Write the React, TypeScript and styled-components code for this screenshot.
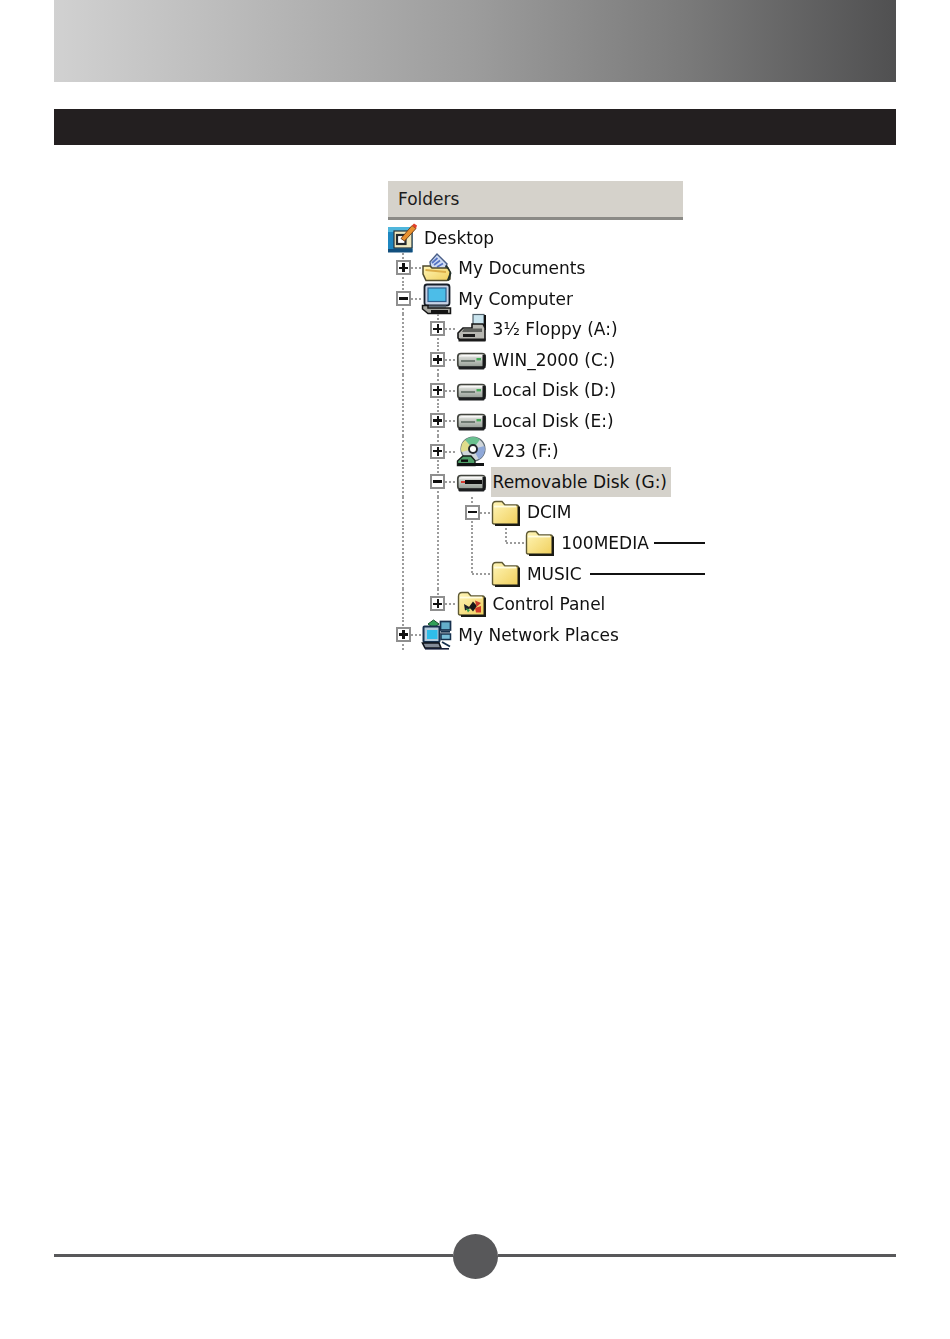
import React from "react";
import styled, { createGlobalStyle } from "styled-components";

const Global = createGlobalStyle`
  html, body { margin: 0; padding: 0; background: #fff; }
  body { font-family: "DejaVu Sans", "Liberation Sans", sans-serif; }
`;

const Page = styled.div`
  box-sizing: border-box;
  width: 950px;
  height: 1339px;
  padding: 0 54px 60px;
  display: flex;
  flex-direction: column;
  overflow: hidden;
`;

const Band = styled.div`
  height: 82px;
  flex: none;
  background: linear-gradient(to right, #d1d1d1 0%, #bcbcbc 20%, #9c9c9c 50%, #7a7a7a 75%, #505051 100%);
`;

const TitleBar = styled.div`
  height: 36px;
  flex: none;
  margin-top: 27px;
  background: #231f20;
`;

const Panel = styled.section`
  margin: 36px 0 0 334px;
  width: 317px;
  flex: none;
  filter: blur(0.6px);
`;

const PanelHeader = styled.div`
  box-sizing: border-box;
  width: 295px;
  height: 38.5px;
  padding: 0 0 0 10px;
  display: flex;
  align-items: center;
  background: #d5d2cb;
  border-bottom: 3px solid #8b8a86;
  font-size: 17px;
  color: #1c1c1c;
`;

const Tree = styled.div`
  margin-top: 3px;
  display: flex;
  flex-direction: column;
`;

const Row = styled.div`
  height: 30.55px;
  display: flex;
  align-items: center;
`;

type SlotKind = "blank" | "pipe" | "tee" | "elbow";

const Slot = styled.div<{ $kind: SlotKind }>`
  position: relative;
  flex: none;
  align-self: stretch;
  width: 34.3px;

  &::before {
    content: "";
    display: ${(p) => (p.$kind === "blank" ? "none" : "block")};
    position: absolute;
    left: 14.25px;
    top: 0;
    width: 2px;
    height: ${(p) => (p.$kind === "elbow" ? "50%" : "100%")};
    background: repeating-linear-gradient(to bottom, #9c9c9c 0 2px, transparent 2px 4px);
  }

  &::after {
    content: "";
    display: ${(p) => (p.$kind === "tee" || p.$kind === "elbow" ? "block" : "none")};
    position: absolute;
    left: 15px;
    right: 0;
    top: calc(50% - 1px);
    height: 2px;
    background: repeating-linear-gradient(to right, #9c9c9c 0 2px, transparent 2px 4px);
  }
`;

const Expander = styled.span`
  position: absolute;
  z-index: 1;
  left: 8px;
  top: calc(50% - 8px);
  box-sizing: border-box;
  width: 15px;
  height: 15px;
  background: #fff;
  border: 2px solid #8f8f8f;
`;

const ExpanderH = styled.i`
  position: absolute;
  left: 1px;
  right: 1px;
  top: 4.25px;
  height: 2.5px;
  background: #111;
`;

const ExpanderV = styled.i`
  position: absolute;
  top: 1px;
  bottom: 1px;
  left: 4.25px;
  width: 2.5px;
  background: #111;
`;

const IconBox = styled.span`
  flex: none;
  width: 29px;
  height: 30px;
  display: block;
  & > svg { display: block; overflow: visible; }
`;

const Label = styled.span<{ $selected?: boolean }>`
  flex: none;
  margin-left: 5px;
  padding: 0 ${(p) => (p.$selected ? "4px" : "2px")} 0 2px;
  line-height: 30.5px;
  font-size: 17px;
  white-space: nowrap;
  color: #111;
  background: ${(p) => (p.$selected ? "#d5d2cb" : "transparent")};
`;

const Leader = styled.span<{ $width: number }>`
  flex: none;
  margin-left: auto;
  width: ${(p) => p.$width}px;
  height: 2px;
  background: #111;
`;

const Footer = styled.footer`
  margin-top: auto;
  flex: none;
  display: flex;
  align-items: center;
`;

const FooterLine = styled.div`
  flex: 1;
  height: 3px;
  margin-bottom: 3px;
  background: #58585a;
`;

const FooterDot = styled.div`
  flex: none;
  width: 45px;
  height: 45px;
  border-radius: 50%;
  background: #58585a;
`;

const Svg = ({ children }: { children: React.ReactNode }) => (
  <svg width="29" height="30" viewBox="0 0 29 30" xmlns="http://www.w3.org/2000/svg">
    {children}
  </svg>
);

const Defs = () => (
  <defs>
    <linearGradient id="fold" x1="0" y1="0" x2="1" y2="1">
      <stop offset="0" stopColor="#fff6b8" />
      <stop offset="1" stopColor="#f0cf5c" />
    </linearGradient>
    <linearGradient id="disk" x1="0" y1="0" x2="0" y2="1">
      <stop offset="0" stopColor="#eeeeea" />
      <stop offset="1" stopColor="#8f9890" />
    </linearGradient>
  </defs>
);

const DesktopIcon = () => (
  <Svg>
    <rect x="0" y="4" width="24.5" height="25" fill="#1d86c0" />
    <rect x="0" y="4" width="24.5" height="5" fill="#4fb6dc" />
    <rect x="6" y="8" width="18" height="17" fill="#efe9c0" stroke="#27323a" strokeWidth="1.2" />
    <rect x="9" y="12" width="8.5" height="9" fill="#fff" stroke="#22282c" strokeWidth="2.2" />
    <path d="M13 15.5 L24 2.5 L28 5.5 L16.5 18 Z" fill="#e8912f" stroke="#6f3a10" strokeWidth="0.9" />
    <path d="M24 2.5 L28 5.5 L29 2.5 L26 0.5 Z" fill="#e2402a" />
    <path d="M0 26 H24.5 V29.5 H0 Z" fill="#124f7d" />
  </Svg>
);

const DocumentsIcon = () => (
  <Svg>
    <path d="M8 9 L15 1 L25 11 L22 18 L9 16 Z" fill="#cfdcf4" stroke="#4a5f88" strokeWidth="1.4" />
    <path d="M10 10 L15.5 5 M12 12 L18 7.5 M15 14 L21 10.5" stroke="#5573c4" strokeWidth="1.7" />
    <path d="M1 13 H8 L10 15 H26 L28 19 V26 L25 27.5 H4 L1 21 Z" fill="url(#fold)" stroke="#4f4a2c" strokeWidth="1.5" />
    <path d="M23 13 L28 19 L25 27 L27 28 L29.5 20 L25 12 Z" fill="#22302a" />
    <path d="M3.5 17 L24 19" stroke="#dcae48" strokeWidth="1.8" />
  </Svg>
);

const ComputerIcon = () => (
  <Svg>
    <rect x="2.5" y="0.5" width="25" height="21" rx="2.5" fill="#c8d2e6" stroke="#161d28" strokeWidth="1.8" />
    <rect x="6" y="4" width="18" height="13.5" fill="#4cbde8" />
    <rect x="6" y="4" width="18" height="13.5" fill="none" stroke="#2e5f8e" strokeWidth="1.2" />
    <path d="M7 21.5 H24 V23.5 H7 Z" fill="#5e6b78" />
    <path d="M0.5 21.5 L6 21.5 L6 24 L28.5 24 V29.5 H6 L0.5 25 Z" fill="#a6a6a0" stroke="#141414" strokeWidth="1.5" />
    <rect x="9" y="26" width="17" height="3" fill="#141414" />
  </Svg>
);

const FloppyIcon = () => (
  <Svg>
    <rect x="16" y="0.5" width="11" height="14.5" fill="#c9e4ee" stroke="#50606a" strokeWidth="1.2" />
    <path d="M27 1 L29 1 V16 H27 Z" fill="#111" />
    <path d="M15 10 L26 10 L28 14 L28 26 H3 L1 24 V19 L6 14 H15 Z" fill="#b8b8b2" stroke="#161616" strokeWidth="1.6" />
    <path d="M7 14.5 H25 V18 H5 Z" fill="#5e605c" />
    <rect x="6" y="20" width="12" height="3" fill="#1a1a1a" />
    <rect x="1.5" y="24.5" width="27" height="3" fill="#1a1a1a" />
  </Svg>
);

const DiskIcon = ({ removable }: { removable?: boolean }) => (
  <Svg>
    <rect x="0.8" y="8.5" width="27.4" height="14" rx="3.2" fill="url(#disk)" stroke="#43453f" strokeWidth="1.7" />
    <path d="M2 12 Q3 10 6 10 H26 V11.5 H4 Z" fill="#fff" opacity="0.8" />
    {removable ? (
      <>
        <rect x="4" y="14" width="5" height="2" fill="#d73a30" />
        <rect x="8" y="13" width="17" height="4" fill="#0f0f0f" />
      </>
    ) : (
      <>
        <rect x="4" y="15" width="14" height="2" fill="#6f7a72" />
        <rect x="19.5" y="13" width="4.5" height="2.4" fill="#45ac58" />
      </>
    )}
    <rect x="1.5" y="21.2" width="26" height="3.2" rx="1.2" fill="#1c1e20" />
    <rect x="25.5" y="10" width="3" height="13" fill="#17181a" />
  </Svg>
);

const CdIcon = () => (
  <Svg>
    <circle cx="16" cy="12" r="12" fill="#cfd6da" stroke="#5f6a72" strokeWidth="1.2" />
    <path d="M16 12 L8 3 A12 12 0 0 1 23 2.5 Z" fill="#69c08f" />
    <path d="M16 12 L4.5 15 A12 12 0 0 1 8 3 Z" fill="#dfdc8a" />
    <path d="M16 12 L27.5 9 A12 12 0 0 1 22 22.5 Z" fill="#8fa8d8" />
    <circle cx="16" cy="12" r="4" fill="#fff" stroke="#23272c" strokeWidth="1.9" />
    <path d="M0.5 24 L6 19 H14 L18 23.5 V28.5 H0.5 Z" fill="#4f9f68" stroke="#161f19" strokeWidth="1.4" />
    <path d="M1 26 H27 V29 H1 Z" fill="#111314" />
    <rect x="4" y="22.5" width="7" height="2.4" fill="#0c0c0c" />
  </Svg>
);

const FolderShape = () => (
  <>
    <path d="M1.5 7.5 Q1.5 3.5 5 3.5 H11 L14 7 H25.5 Q27.5 7 27.5 9.5 V26 H3 Q1.5 26 1.5 24.5 Z" fill="url(#fold)" stroke="#5f5a34" strokeWidth="1.4" />
    <path d="M26.6 8.5 V26 H4 V28 H29 V8.5 Z" fill="#1a1a14" />
    <path d="M3 8.5 H25" stroke="#fffde0" strokeWidth="1.8" />
  </>
);

const FolderIcon = () => (
  <Svg>
    <FolderShape />
  </Svg>
);

const ControlIcon = () => (
  <Svg>
    <FolderShape />
    <path d="M7 15 L14 19 L8 21.5 Z" fill="#1c1f28" />
    <path d="M12 18 L16 12.5 L20 17 L16 22.5 Z" fill="#181818" />
    <path d="M18 11.5 L24 14 L19.5 18 Z" fill="#c73b2c" />
    <path d="M18 19 L24 17 L24 23.5 L19 23.5 Z" fill="#cf3a28" />
    <path d="M9 19 L13 21 L11 23.5 Z" fill="#2d9f4d" />
  </Svg>
);

const NetworkIcon = () => (
  <Svg>
    <path d="M6 4 L11.5 0 L17 4 L11.5 8 Z" fill="#2f9f57" stroke="#174f2a" strokeWidth="1" />
    <rect x="1.5" y="6.5" width="16" height="15.5" rx="1" fill="#b4c9da" stroke="#16304d" strokeWidth="2" />
    <rect x="5" y="10" width="10.5" height="9" fill="#2fbdea" />
    <rect x="18.5" y="1.5" width="10" height="8.5" fill="#63aeca" stroke="#16304d" strokeWidth="1.7" />
    <rect x="19" y="14" width="9.5" height="5.5" fill="#78bcd6" stroke="#16304d" strokeWidth="1.5" />
    <path d="M19 11.8 H28" stroke="#16304d" strokeWidth="1.7" />
    <path d="M0.5 23 H17 L19 28 H3 Z" fill="#848c98" stroke="#10141b" strokeWidth="1.6" />
    <path d="M3 28 H27 V29.6 H3 Z" fill="#141c36" />
    <path d="M20 22 L28 26.5" stroke="#16304d" strokeWidth="1.9" />
  </Svg>
);

type Exp = "plus" | "minus" | undefined;

interface Item {
  label: string;
  icon: React.ReactNode;
  slots?: SlotKind[];
  exp?: Exp;
  selected?: boolean;
  leader?: number;
}

const items: Item[] = [
  { label: "Desktop", icon: <DesktopIcon /> },
  { label: "My Documents", icon: <DocumentsIcon />, slots: ["tee"], exp: "plus" },
  { label: "My Computer", icon: <ComputerIcon />, slots: ["tee"], exp: "minus" },
  { label: "3½ Floppy (A:)", icon: <FloppyIcon />, slots: ["pipe", "tee"], exp: "plus" },
  { label: "WIN_2000 (C:)", icon: <DiskIcon />, slots: ["pipe", "tee"], exp: "plus" },
  { label: "Local Disk (D:)", icon: <DiskIcon />, slots: ["pipe", "tee"], exp: "plus" },
  { label: "Local Disk (E:)", icon: <DiskIcon />, slots: ["pipe", "tee"], exp: "plus" },
  { label: "V23 (F:)", icon: <CdIcon />, slots: ["pipe", "tee"], exp: "plus" },
  { label: "Removable Disk (G:)", icon: <DiskIcon removable />, slots: ["pipe", "tee"], exp: "minus", selected: true },
  { label: "DCIM", icon: <FolderIcon />, slots: ["pipe", "pipe", "tee"], exp: "minus" },
  { label: "100MEDIA", icon: <FolderIcon />, slots: ["pipe", "pipe", "pipe", "elbow"], leader: 51 },
  { label: "MUSIC", icon: <FolderIcon />, slots: ["pipe", "pipe", "elbow"], leader: 115 },
  { label: "Control Panel", icon: <ControlIcon />, slots: ["pipe", "elbow"], exp: "plus" },
  { label: "My Network Places", icon: <NetworkIcon />, slots: ["tee"], exp: "plus" },
];

const SharedDefs = styled.svg`
  position: absolute;
  width: 0;
  height: 0;
`;

export default function App() {
  return (
    <>
      <Global />
      <Page>
        <Band />
        <TitleBar />
        <Panel>
          <PanelHeader>Folders</PanelHeader>
          <Tree>
            <SharedDefs>
              <Defs />
            </SharedDefs>
            {items.map((item) => {
              const slots = item.slots ?? [];
              return (
                <Row key={item.label}>
                  {slots.map((kind, i) => (
                    <Slot key={i} $kind={kind}>
                      {i === slots.length - 1 && item.exp && (
                        <Expander>
                          <ExpanderH />
                          {item.exp === "plus" && <ExpanderV />}
                        </Expander>
                      )}
                    </Slot>
                  ))}
                  <IconBox>{item.icon}</IconBox>
                  <Label $selected={item.selected}>{item.label}</Label>
                  {item.leader !== undefined && <Leader $width={item.leader} />}
                </Row>
              );
            })}
          </Tree>
        </Panel>
        <Footer>
          <FooterLine />
          <FooterDot />
          <FooterLine />
        </Footer>
      </Page>
    </>
  );
}
